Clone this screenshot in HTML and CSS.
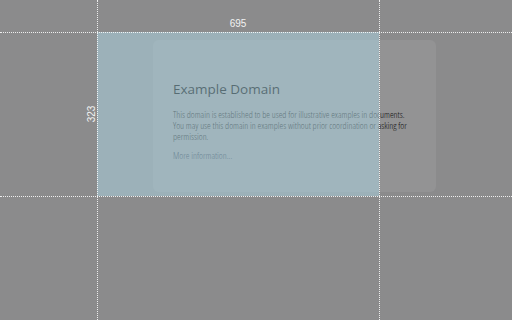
FILE: index.html
```html
<!DOCTYPE html>
<html>
<head>
<meta charset="utf-8">
<title>Example Domain</title>
<link rel="stylesheet" href="styles.css">
</head>
<body>
<div class="card">
  <h1 class="title">Example Domain</h1>
  <p class="text">This domain is established to be used for illustrative examples in documents. You may use this domain in examples without prior coordination or asking for permission.</p>
  <p class="text"><a class="link" href="#">More information...</a></p>
</div>

<div class="dim"></div>
<div class="selection"></div>
<div class="guide guide-v guide-left"></div>
<div class="guide guide-v guide-right"></div>
<div class="guide guide-h guide-top"></div>
<div class="guide guide-h guide-bottom"></div>
<div class="label label-w">695</div>
<div class="label label-h">323</div>
</body>
</html>
```

FILE: styles.css
```css
html, body {
  margin: 0;
  padding: 0;
}
body {
  width: 512px;
  height: 320px;
  overflow: hidden;
  background: #f0f0f2;
  font-family: "Open Sans", "Noto Sans", sans-serif;
  color: #000;
}
.card {
  width: 243px;
  margin: 40px 0 0 153px;
  padding: 19px 20px 23px 20px;
  background: #fdfdff;
  border-radius: 6px;
}
.title {
  margin: 20px 0 10px 0;
  font-size: 13.5px;
  font-weight: 400;
  line-height: 20px;
  color: #000;
}
.text {
  margin: 0 0 8px 0;
  font-size: 9.3px;
  font-stretch: 75%;
  font-weight: 300;
  line-height: 11px;
  color: #222;
}
.link {
  color: #4a5878;
  text-decoration: none;
}
.dim {
  position: absolute;
  left: 0;
  top: 0;
  width: 512px;
  height: 320px;
  background: rgba(0, 0, 0, 0.42);
}
.selection {
  position: absolute;
  left: 97px;
  top: 32px;
  width: 282px;
  height: 164px;
  background: rgba(173, 216, 230, 0.5);
}
.guide {
  position: absolute;
}
.guide-v {
  top: 0;
  width: 0;
  height: 320px;
  border-left: 1px dotted rgba(255, 255, 255, 0.85);
}
.guide-h {
  left: 0;
  height: 0;
  width: 512px;
  border-top: 1px dotted rgba(255, 255, 255, 0.85);
}
.guide-left { left: 97px; }
.guide-right { left: 379px; }
.guide-top { top: 32px; }
.guide-bottom { top: 196px; }
.label {
  position: absolute;
  font-family: "Liberation Sans", Arial, sans-serif;
  font-size: 10px;
  line-height: 10px;
  color: #f2f2f2;
  width: 40px;
  text-align: center;
}
.label-w {
  left: 218px;
  top: 19px;
}
.label-h {
  left: 72px;
  top: 109px;
  transform: rotate(-90deg);
}
```
